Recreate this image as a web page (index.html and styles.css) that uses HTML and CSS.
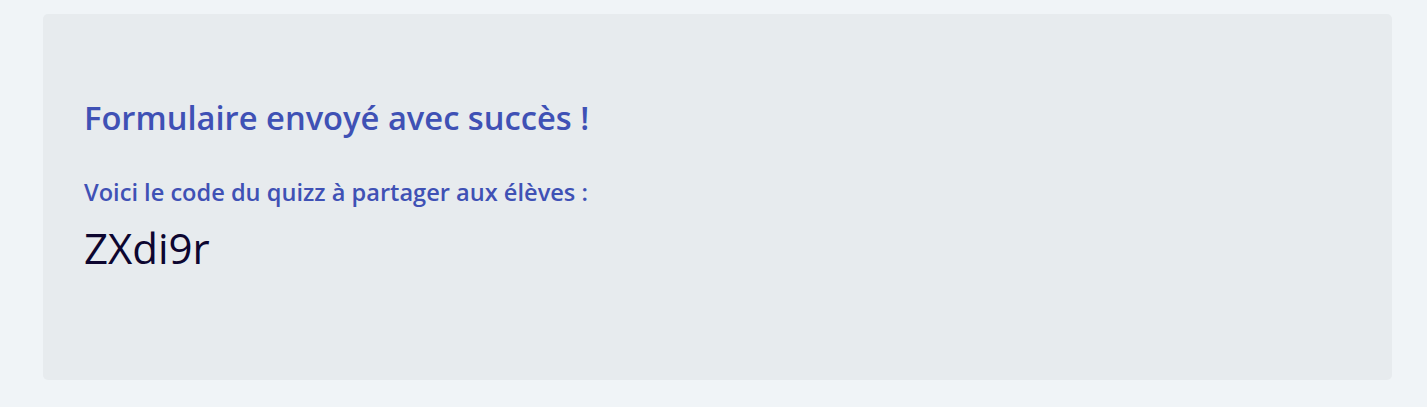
FILE: index.html
```html
<!DOCTYPE html>
<html lang="fr">
<head>
<meta charset="utf-8">
<title>Formulaire envoyé</title>
<link rel="stylesheet" href="styles.css">
</head>
<body>
<main class="page">
  <section class="card">
    <h1 class="title">Formulaire envoyé avec succès !</h1>
    <p class="subtitle">Voici le code du quizz à partager aux élèves :</p>
    <p class="code">ZXdi9r</p>
  </section>
</main>
</body>
</html>
```

FILE: styles.css
```css
html, body {
  margin: 0;
  padding: 0;
}
body {
  background: #f0f4f7;
  font-family: "Open Sans", "Noto Sans", sans-serif;
}
.page {
  padding: 14px 35px 27px 43px;
}
.card {
  background: #e7ebee;
  border-radius: 5px;
  height: 366px;
  box-sizing: border-box;
  padding: 82px 41px 0 41px;
}
.title {
  margin: 0;
  font-size: 32.7px;
  font-weight: 600;
  color: #3f51b5;
  line-height: 44px;
}
.subtitle {
  margin: 36px 0 0 0;
  font-size: 23.6px;
  font-weight: 600;
  color: #3f51b5;
  line-height: 32px;
}
.code {
  margin: 14px 0 0 0;
  font-size: 42px;
  font-weight: 400;
  color: #0d0630;
  line-height: 52px;
}
```
